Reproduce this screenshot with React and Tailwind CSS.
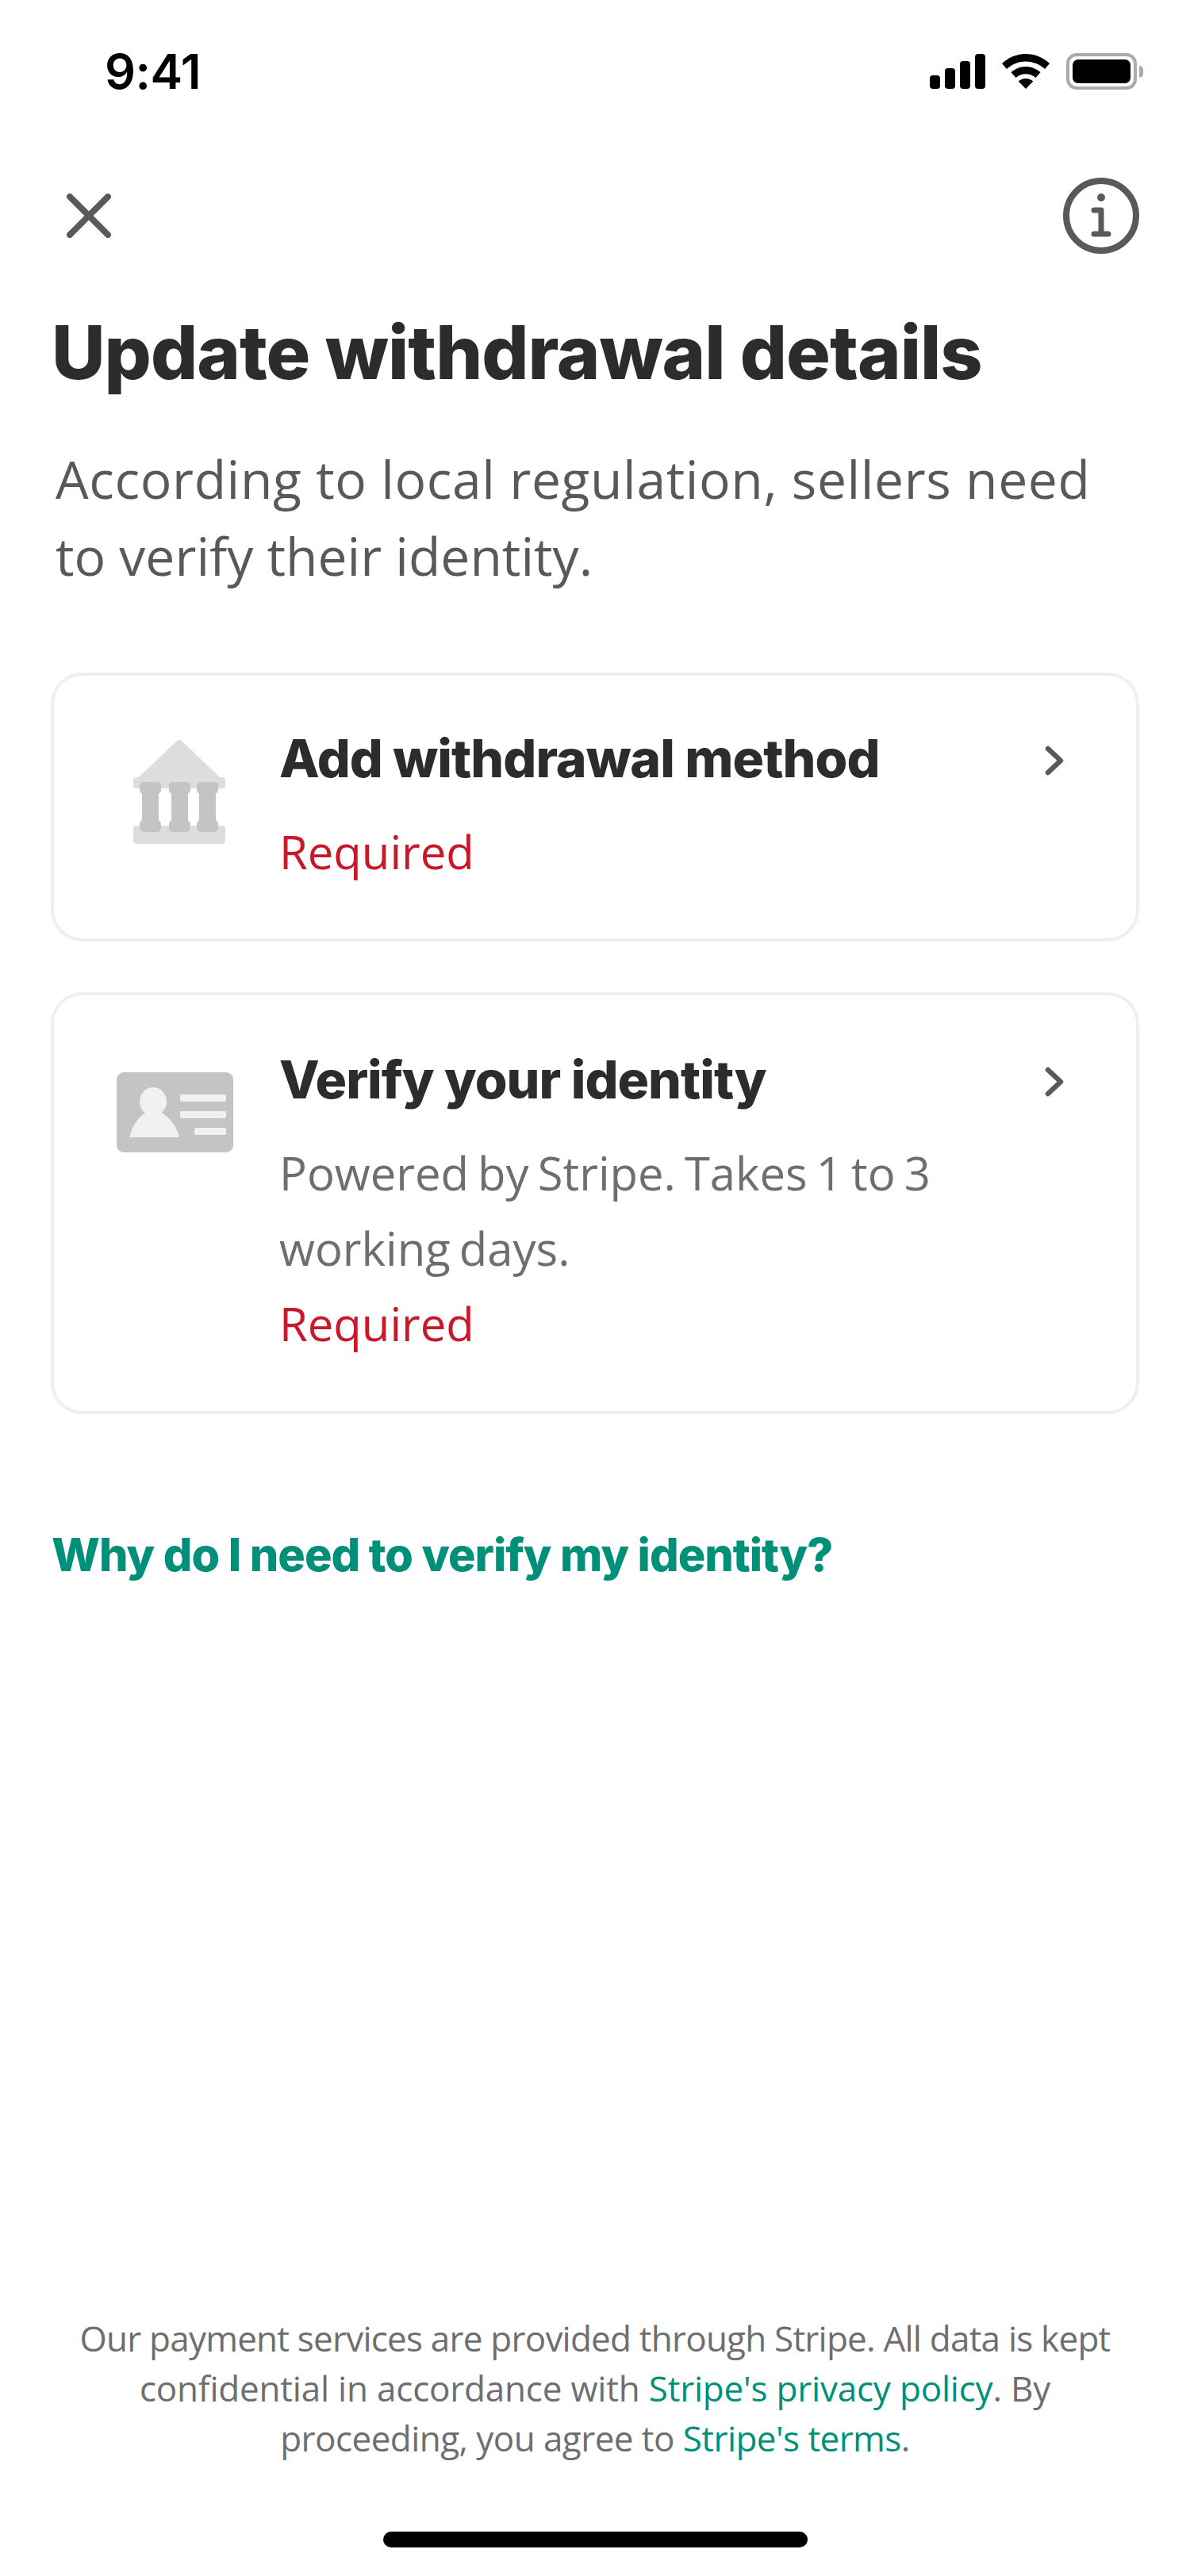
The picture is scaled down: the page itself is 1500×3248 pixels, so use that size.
const BODY = "font-['Open_Sans',sans-serif]"

function BankIcon() {
  return (
    <svg width="116" height="132" viewBox="0 0 116 132">
      <path d="M54 3a5 5 0 0 1 8 0l47 45h3a4 4 0 0 1 4 4v6a4 4 0 0 1-4 4H4a4 4 0 0 1-4-4v-6a4 4 0 0 1 4-4h3z" fill="#dddddd" />
      <rect x="0" y="109" width="116" height="23" rx="4" fill="#dddddd" />
      {[8, 45, 80].map((x) => (
        <g key={x} fill="#c4c4c4">
          <rect x={x} y="54" width="27" height="15" rx="5" />
          <rect x={x + 3} y="60" width="21" height="50" />
          <rect x={x} y="102" width="27" height="15" rx="5" />
        </g>
      ))}
    </svg>
  )
}

function IdIcon() {
  return (
    <svg width="147" height="101" viewBox="0 0 147 101">
      <rect width="147" height="101" rx="9" fill="#c4c4c4" />
      <ellipse cx="46" cy="37" rx="17" ry="18" fill="#f0f1f0" />
      <path d="M38 50h17c12 6 21 19 24 32H16c3-13 11-26 22-32z" fill="#f0f1f0" />
      <rect x="80" y="28" width="58" height="9" rx="2" fill="#f0f1f0" />
      <rect x="80" y="49" width="58" height="9" rx="2" fill="#f0f1f0" />
      <rect x="98" y="70" width="40" height="9" rx="2" fill="#f0f1f0" />
    </svg>
  )
}

function Chevron() {
  return (
    <svg width="24" height="38" viewBox="0 0 24 38" fill="none" stroke="#58595b" strokeWidth="6.500" strokeLinecap="round" strokeLinejoin="round">
      <path d="M4 4l16 15L4 34" />
    </svg>
  )
}

function StatusBar() {
  return (
    <div className="flex items-center justify-between h-[46px] mt-[67px] pl-[132px] pr-[59px]">
      <span className="font-['Inter',sans-serif] font-semibold text-[61px] leading-none tracking-[-0.5px] text-black">9:41</span>
      <div className="flex items-center">
        <svg width="70" height="44" viewBox="0 0 70 44" fill="#000">
          <rect x="0" y="27" width="13" height="17" rx="4" />
          <rect x="19" y="18" width="13" height="26" rx="4" />
          <rect x="38" y="9" width="13" height="35" rx="4" />
          <rect x="57" y="0" width="13" height="44" rx="4" />
        </svg>
        <svg className="ml-[20px]" width="62" height="44" viewBox="0 0 62 44" fill="#000">
          <path d="M31 0c11.5 0 22 4.500 30 12l-6 7c-6.500-6-15-9.500-24-9.500S13.500 13 7 19l-6-7C9 4.500 19.500 0 31 0z" />
          <path d="M31 16c7 0 13.500 2.700 18.500 7.200l-6 6.800c-3.300-3-7.700-4.800-12.500-4.800S21.800 27 18.500 30l-6-6.800C17.500 18.700 24 16 31 16z" />
          <path d="M31 31c3.500 0 6.800 1.300 9.300 3.500L31 44l-9.300-9.500C24.200 32.300 27.500 31 31 31z" />
        </svg>
        <div className="ml-[20px] flex items-center">
          <div className="w-[89px] h-[46px] rounded-[13px] border-[4px] border-[#ababab] p-[4px]">
            <div className="w-full h-full rounded-[7px] bg-black" />
          </div>
          <div className="ml-[3px] w-[5px] h-[15px] rounded-r-[5px] bg-[#ababab]" />
        </div>
      </div>
    </div>
  )
}

function Card({ icon, title, desc, className }) {
  return (
    <div className={`flex border-[4px] border-[#efefef] rounded-[40px] ${className}`}>
      <div className="w-[284px] shrink-0">{icon}</div>
      <div className="flex-1 min-w-0">
        <div className="font-['Inter',sans-serif] font-extrabold text-[66px] leading-[80px] tracking-[-1px] text-[#2c2c2c]">{title}</div>
        <div className={`${BODY} text-[58px] leading-[95px] mt-[30px]`}>
          {desc && <div className="text-[#6d6e71] [word-spacing:-4px]">{desc}</div>}
          <div className="text-[#c9182b]">Required</div>
        </div>
      </div>
      <div className="w-[115px] shrink-0">
        <div className="mt-[24px]"><Chevron /></div>
      </div>
    </div>
  )
}

export default function App() {
  return (
    <div className="relative flex flex-col w-[1500px] min-h-[3248px] bg-white overflow-hidden">
      <StatusBar />

      <div className="flex items-center justify-between mt-[111px] pl-[84px] pr-[64px]">
        <svg width="56" height="56" viewBox="0 0 56 56" fill="none" stroke="#58595b" strokeWidth="8" strokeLinecap="round">
          <path d="M4 4l48 48M52 4L4 52" />
        </svg>
        <svg width="96" height="96" viewBox="0 0 96 96" fill="none" stroke="#58595b">
          <circle cx="48" cy="48" r="44" strokeWidth="8" />
          <circle cx="48" cy="25" r="5" fill="#58595b" stroke="none" />
          <path d="M39 41h9v30M39 71h18" strokeWidth="7" strokeLinecap="round" strokeLinejoin="round" />
        </svg>
      </div>

      <h1 className="mt-[69px] pl-[65px] font-['Inter',sans-serif] font-extrabold text-[93px] leading-[110px] tracking-[-1px] text-[#2c2c2c]">
        Update withdrawal details
      </h1>

      <p className={`mt-[56px] ml-[70px] ${BODY} text-[66px] leading-[97px] text-[#58595b]`}>
        <span className="block tracking-[0.6px]">According to local regulation, sellers need</span>
        <span className="block">to verify their identity.</span>
      </p>

      <div className="mt-[99px] mx-[64px] flex flex-col gap-[64px]">
        <Card
          icon={<div className="ml-[100px] mt-[16px]"><BankIcon /></div>}
          title="Add withdrawal method"
          className="h-[339px] pt-[64px]"
        />
        <Card
          icon={<div className="ml-[79px] mt-[31px]"><IdIcon /></div>}
          title="Verify your identity"
          desc="Powered by Stripe. Takes 1 to 3 working days."
          className="h-[532px] pt-[66px]"
        />
      </div>

      <a className="mt-[142px] ml-[65px] font-['Inter',sans-serif] font-extrabold text-[57.6px] leading-[70px] tracking-[-1px] text-[#00907a]">
        Why do I need to verify my identity?
      </a>

      <div className="mt-auto">
        <p className={`${BODY} text-center text-[44px] leading-[63px] text-[#6d6e71]`}>
          <span className="block tracking-[-0.77px]">Our payment services are provided through Stripe. All data is kept</span>
          <span className="block tracking-[-0.2px]">confidential in accordance with <span className="text-[#00907a]">Stripe's privacy policy</span>. By</span>
          <span className="block tracking-[-0.55px]">proceeding, you agree to <span className="text-[#00907a]">Stripe's terms</span>.</span>
        </p>
        <div className="mx-auto mt-[86px] mb-[36px] w-[535px] h-[20px] rounded-full bg-black" />
      </div>
    </div>
  )
}
